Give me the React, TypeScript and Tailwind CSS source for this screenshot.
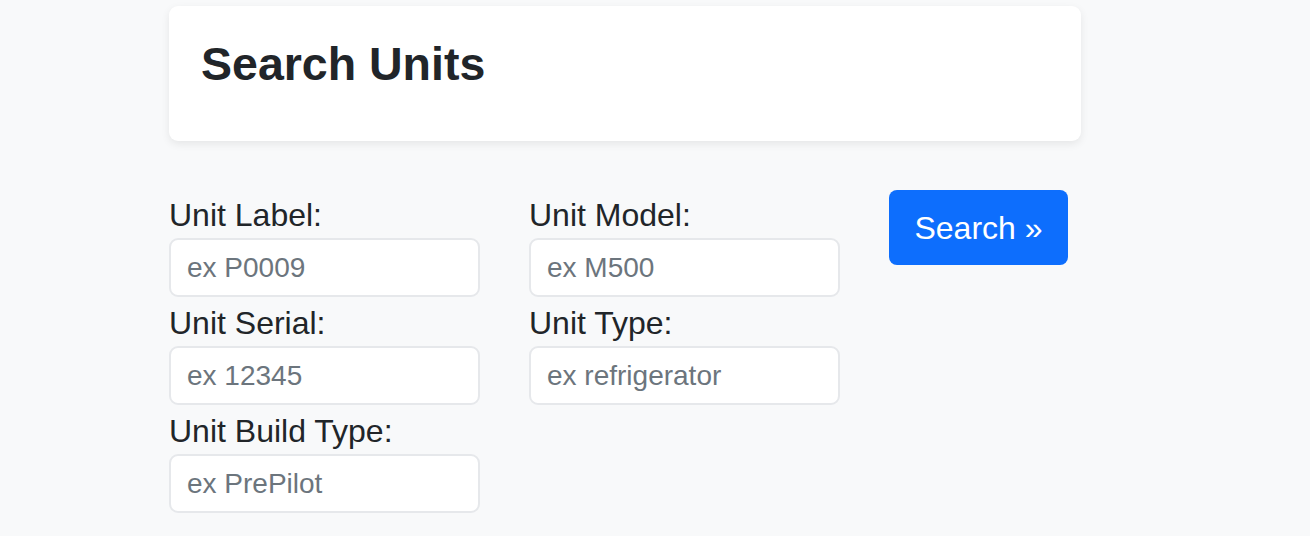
export default function App() {
  const fields: [string, string][] = [
    ['Unit Label:', 'ex P0009'],
    ['Unit Model:', 'ex M500'],
    ['Unit Serial:', 'ex 12345'],
    ['Unit Type:', 'ex refrigerator'],
    ['Unit Build Type:', 'ex PrePilot'],
  ]

  return (
    <div className="min-h-screen bg-[#f8f9fa] font-['Liberation_Sans',Arial,sans-serif] text-[#212529]">
      <div className="ml-[169px] w-[912px] pt-[6px]">
        <div className="h-[135px] rounded-[9px] bg-white px-[32px] pt-[31px] shadow-[0_3px_8px_rgba(0,0,0,0.08)]">
          <h1 className="text-[46.5px] font-bold leading-[54px]">Search Units</h1>
        </div>

        <div className="mt-[48px] flex items-start gap-[49px]">
          <div className="grid w-[671px] grid-cols-2 gap-x-[49px]">
            {fields.map(([label, placeholder]) => (
              <div key={label} className="flex flex-col">
                <label className="h-[49px] pt-[6px] text-[32px] leading-[40px]">{label}</label>
                <input
                  placeholder={placeholder}
                  className="h-[59px] w-[311px] rounded-[9px] border-2 border-[#e6e8eb] bg-white px-[16px] text-[28px] outline-none placeholder:text-[#6c757d]"
                />
              </div>
            ))}
          </div>
          <button className="mt-[1px] h-[75px] w-[179px] rounded-[8px] bg-[#0d6efd] text-[32px] text-white">
            Search &raquo;
          </button>
        </div>
      </div>
    </div>
  )
}
